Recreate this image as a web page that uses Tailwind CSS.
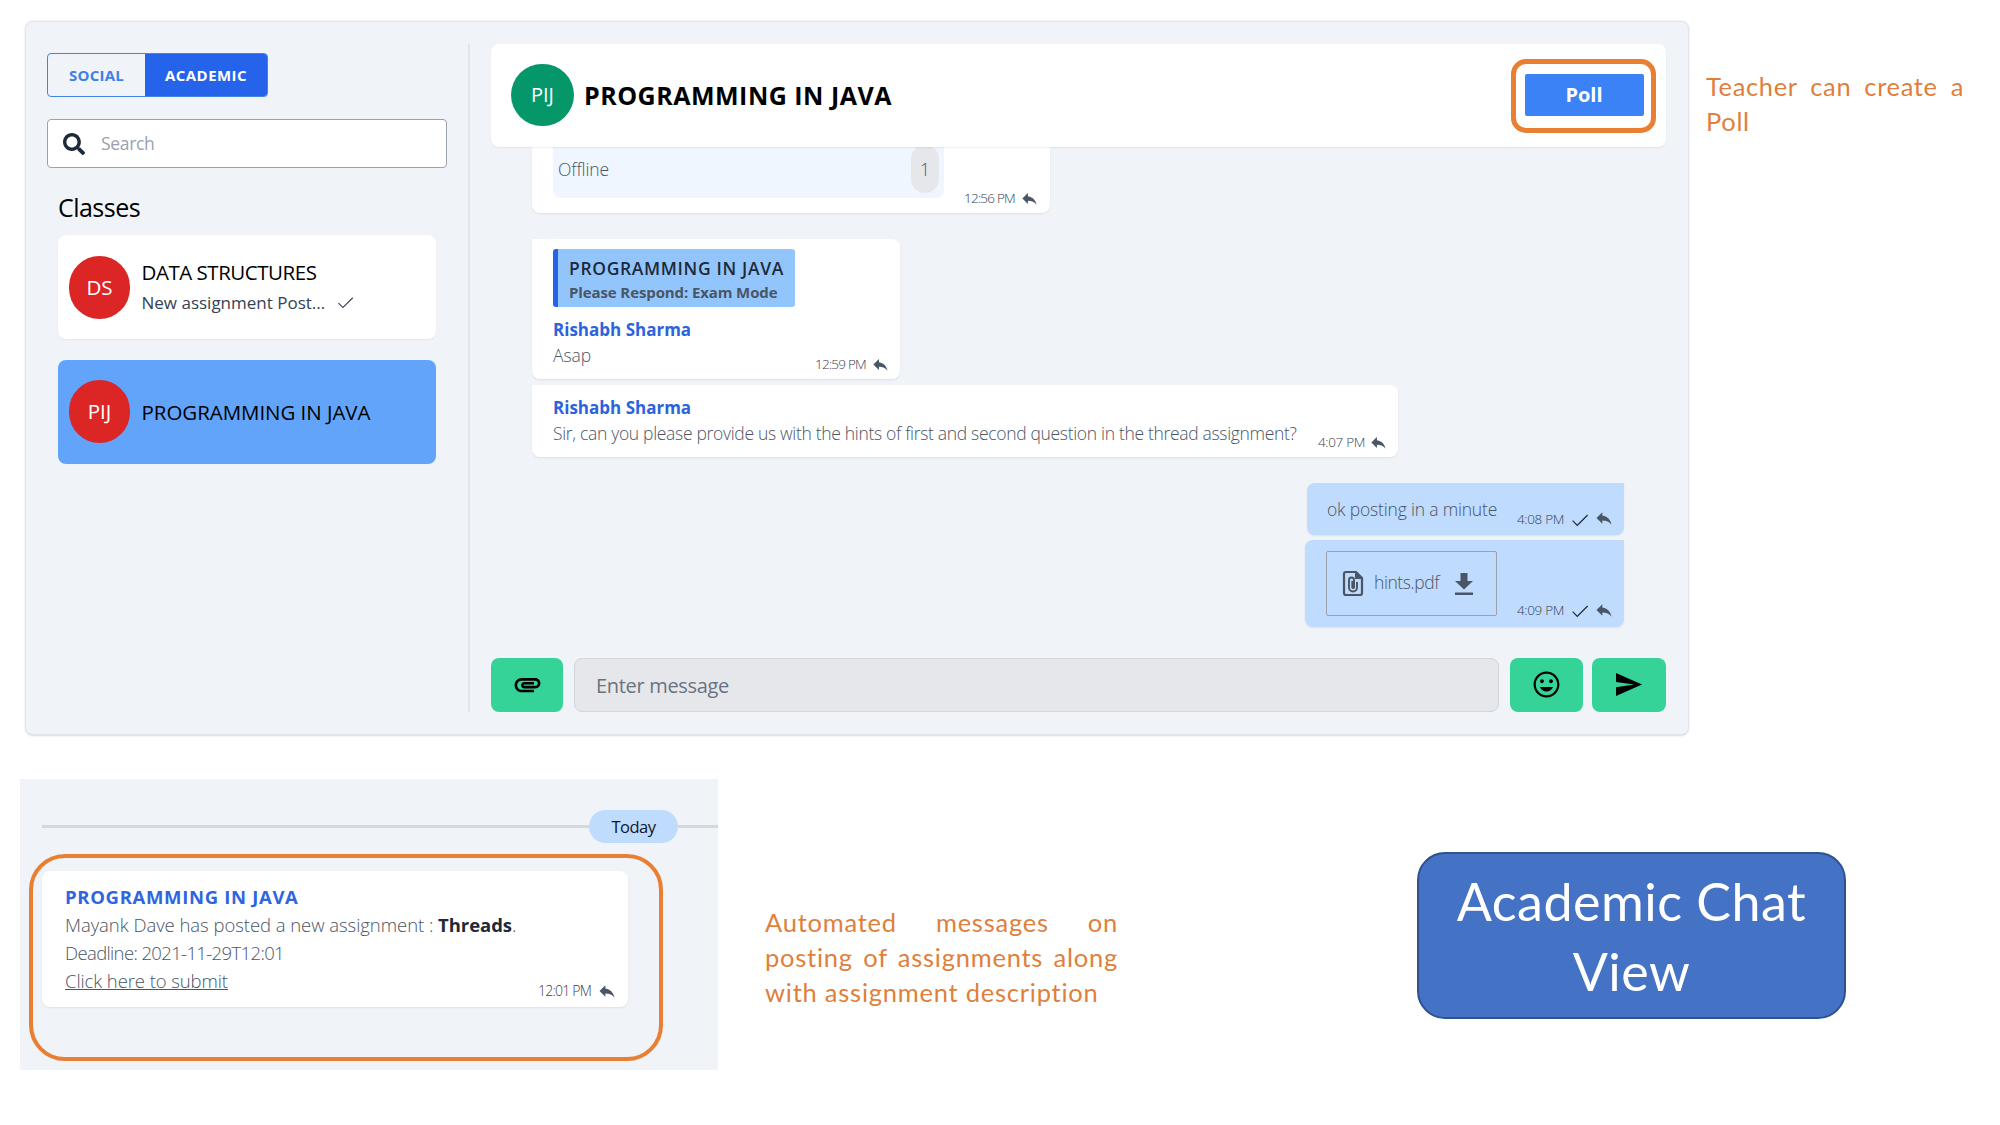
<!DOCTYPE html>
<html lang="en">
<head>
<meta charset="utf-8">
<title>Academic Chat View</title>
<script src="https://cdn.jsdelivr.net/npm/@tailwindcss/browser@4"></script>
</head>
<body class="bg-white">
<svg class="hidden">
  <symbol id="reply" viewBox="0 0 24 24"><path d="M10 9V5l-7 7 7 7v-4.100c5 0 8.500 1.600 11 5.100-1-5-4-10-11-11z"/></symbol>
  <symbol id="check" viewBox="0 0 24 24"><path d="M9 16.900 4.400 12.300l-.9.900L9 18.700 20.800 7l-.9-.9z"/></symbol>
</svg>
<div class="h-[1125px] w-[2000px] overflow-hidden pt-[21px] font-['Open_Sans','Noto_Sans',sans-serif] text-black">

  <div class="flex items-start">
    <!-- Chat window -->
    <div class="ml-[25px] flex h-[715px] w-[1664px] shrink-0 rounded-lg border border-b-2 border-[#e1e5ea] bg-[#f0f4f9] pl-[21px] pt-[22px] shadow-[0_0_3px_rgba(0,0,0,0.1)]">
      <!-- Sidebar -->
      <aside class="h-[668px] w-[423px] border-r-2 border-[#e2e6ec] pt-[9px]">
        <div class="flex h-[44px] w-[221px] overflow-hidden rounded-[4px] border border-[#4285e0] text-[15px] font-bold">
          <div class="flex w-[97px] items-center justify-center tracking-[0.24px] text-[#4080e6]">SOCIAL</div>
          <div class="flex grow items-center justify-center bg-[#2563eb] tracking-[0.45px] text-white">ACADEMIC</div>
        </div>
        <div class="mt-[22px] flex h-[49px] w-[400px] items-center rounded-[4px] border border-gray-400 bg-white pl-[15px]">
          <svg class="size-[22px] fill-gray-800" viewBox="0 0 512 512"><path d="M505 442.700 405.300 343c-4.500-4.500-10.600-7-17-7H372c27.600-35.300 44-79.700 44-128C416 93.100 322.900 0 208 0S0 93.100 0 208s93.100 208 208 208c48.300 0 92.700-16.400 128-44v16.300c0 6.400 2.500 12.500 7 17l99.700 99.700c9.400 9.400 24.600 9.400 33.900 0l28.300-28.300c9.400-9.400 9.400-24.600.1-34zM208 336c-70.700 0-128-57.200-128-128 0-70.700 57.200-128 128-128 70.700 0 128 57.200 128 128 0 70.700-57.200 128-128 128z"/></svg>
          <span class="mb-px ml-[16px] text-[17.5px] tracking-[-0.32px] text-gray-400">Search</span>
        </div>
        <h2 class="ml-[11px] mt-[19px] h-[48px] text-[25px] leading-[40px] tracking-[-0.53px]">Classes</h2>
        <div class="ml-[11px] flex h-[104px] w-[378px] items-center rounded-lg bg-white pl-[11px] shadow-[0_1px_2px_rgba(0,0,0,0.06)]">
          <div class="flex h-[63px] w-[61px] items-center justify-center rounded-full bg-[#dc2626] text-[20.5px] text-white">DS</div>
          <div class="ml-[11.5px]">
            <div class="text-[20.5px] leading-[30px] tracking-[-0.47px]">DATA STRUCTURES</div>
            <div class="flex items-center text-[17px] leading-[31px] text-gray-700">New assignment Post...
              <svg class="ml-[10px] size-[21px] fill-gray-700"><use href="#check"/></svg>
            </div>
          </div>
        </div>
        <div class="ml-[11px] mt-[21px] flex h-[104px] w-[378px] items-center rounded-lg bg-[#61a4fa] pl-[11px]">
          <div class="-mt-px flex h-[63px] w-[61px] items-center justify-center rounded-full bg-[#dc2626] text-[20.5px] text-white">PIJ</div>
          <div class="ml-[11.5px] text-[20.5px] leading-[30px] tracking-[-0.05px]">PROGRAMMING IN JAVA</div>
        </div>
      </aside>

      <!-- Conversation -->
      <main class="ml-[21px] w-[1175px]">
        <header class="relative z-10 flex h-[103px] items-center rounded-lg bg-white pl-[20px] shadow-[0_1px_2px_rgba(0,0,0,0.07)]">
          <div class="-mt-px flex h-[62px] w-[63px] items-center justify-center rounded-full bg-[#059669] text-[20px] text-white">PIJ</div>
          <h1 class="ml-[10px] text-[25px] font-bold tracking-[0.5px]">PROGRAMMING IN JAVA</h1>
          <div class="ml-auto mr-[10px] flex h-[74px] w-[145px] items-center justify-center rounded-[15px] border-[5px] border-[#e97f33] pb-px pl-px">
            <button class="h-[42px] w-[119px] rounded-[2px] bg-[#3b82f6] text-[20px] font-bold text-white">Poll</button>
          </div>
        </header>

        <section class="flex h-[511px] flex-col pl-[41px] pr-[42px] font-light text-gray-600">
          <!-- Poll result message, scrolled under the header -->
          <div class="flex h-[66px] w-[518px] items-start rounded-b-lg bg-white pl-[21px] shadow-[0_1px_2px_rgba(0,0,0,0.08)]">
            <div class="flex h-[51px] w-[391px] items-start rounded-b-lg bg-[#eff6ff] pl-[5px] pr-[5px]">
              <span class="mt-[9px] text-[17.5px] leading-[26px] tracking-[-0.11px]">Offline</span>
              <span class="-mt-[2px] ml-auto flex h-[48px] w-[28px] items-center justify-center rounded-full bg-gray-200 text-[17.5px]">1</span>
            </div>
            <div class="ml-[20px] mt-[42px] flex h-[18px] items-center text-[13.5px] font-light">
              <span class="w-[56px] tracking-[-0.76px] text-gray-700">12:56 PM</span>
              <svg class="size-[19px] fill-gray-600"><use href="#reply"/></svg>
            </div>
          </div>

          <div class="mt-[26px] flex h-[140px] w-[368px] items-end rounded-lg rounded-tl-none bg-white pb-[11px] pl-[21px] shadow-[0_1px_2px_rgba(0,0,0,0.08)]">
            <div class="w-[262px]">
              <div class="mb-[10px] h-[58px] w-[242px] rounded-[3px] border-l-[5px] border-[#2563eb] bg-[#93c5fd] pl-[11px] pt-[6px]">
                <div class="text-[17.5px] font-semibold leading-[26px] tracking-[0.65px] text-gray-800">PROGRAMMING IN JAVA</div>
                <div class="text-[15px] font-bold leading-[23px] tracking-[-0.11px] text-gray-600">Please Respond: Exam Mode</div>
              </div>
              <div class="text-[17px] font-bold leading-[26px] text-[#2b63dd]">Rishabh Sharma</div>
              <div class="-mt-px text-[17.5px] leading-[26px] tracking-[-0.09px]">Asap</div>
            </div>
            <div class="-mb-[5px] flex h-[18px] items-center text-[13.5px]">
              <span class="w-[56px] tracking-[-0.76px] text-gray-700">12:59 PM</span>
              <svg class="size-[19px] fill-gray-600"><use href="#reply"/></svg>
            </div>
          </div>

          <div class="mt-[6px] flex h-[72px] w-[866px] items-end rounded-lg rounded-tl-none bg-white pb-[11px] pl-[21px] shadow-[0_1px_2px_rgba(0,0,0,0.08)]">
            <div class="w-[765px]">
              <div class="text-[17px] font-bold leading-[26px] text-[#2b63dd]">Rishabh Sharma</div>
              <div class="-mt-px whitespace-nowrap text-[17.5px] leading-[26px] tracking-[-0.32px]">Sir, can you please provide us with the hints of first and second question in the thread assignment?</div>
            </div>
            <div class="-mb-[5px] flex h-[18px] items-center text-[13.5px]">
              <span class="w-[51px] tracking-[-0.34px] text-gray-700">4:07 PM</span>
              <svg class="size-[19px] fill-gray-600"><use href="#reply"/></svg>
            </div>
          </div>

          <div class="mt-[26px] flex h-[52px] w-[317px] items-center self-end rounded-lg rounded-tr-none bg-[#bfdbfe] pl-[20px] shadow-[0_1px_2px_rgba(0,0,0,0.08)]">
            <span class="w-[190px] text-[17.5px] tracking-[-0.18px]">ok posting in a minute</span>
            <div class="mt-[19px] flex items-center text-[13.5px] leading-[18px]">
              <span class="w-[52px] tracking-[-0.34px] text-gray-700">4:08 PM</span>
              <svg class="mt-[2px] size-[22px] fill-gray-800"><use href="#check"/></svg>
              <svg class="-mt-px ml-[3px] size-[20px] fill-gray-600"><use href="#reply"/></svg>
            </div>
          </div>

          <div class="mt-[5px] flex h-[87px] w-[319px] items-center self-end rounded-lg rounded-tr-none bg-[#bfdbfe] pl-[21px] shadow-[0_1px_2px_rgba(0,0,0,0.08)]">
            <div class="flex h-[65px] w-[171px] items-center rounded-[2px] border border-gray-400 pl-[15px]">
              <svg class="h-[27px] w-[22px]" viewBox="0 0 22 27" fill="none"><path d="M4 2H14L20 8V23Q20 25 18 25H4Q2 25 2 23V4Q2 2 4 2Z" stroke="#4b5563" stroke-width="2.200"/><path d="M13 1L21 9H13Z" fill="#4b5563"/><path d="M15 12V17.500A4 4 0 0 1 7 17.500V10A2.500 2.500 0 0 1 12 10V17.500A1 1 0 0 1 10.300 17.500V11" stroke="#4b5563" stroke-width="1.900"/></svg>
              <span class="mb-[2px] ml-[10px] w-[81px] text-[17.5px] tracking-[-0.42px]">hints.pdf</span>
              <svg class="h-[22px] w-[18px] fill-gray-600" viewBox="0 0 18 22"><path d="M5.500 0H12.500V8H18L9 16.500 0 8H5.500ZM0 19.500H18V22H0Z"/></svg>
            </div>
            <div class="ml-[20px] mt-[53px] flex items-center text-[13.5px] leading-[18px]">
              <span class="w-[52px] tracking-[-0.34px] text-gray-700">4:09 PM</span>
              <svg class="mt-[2px] size-[22px] fill-gray-800"><use href="#check"/></svg>
              <svg class="-mt-px ml-[3px] size-[20px] fill-gray-600"><use href="#reply"/></svg>
            </div>
          </div>
        </section>

        <!-- Message input -->
        <footer class="flex h-[54px]">
          <button class="flex w-[72px] items-center justify-center rounded-lg bg-[#36d399]">
            <svg class="-mt-px h-[31px] w-[31px]" viewBox="0 0 24 24"><path d="M2 12.500C2 9.460 4.460 7 7.500 7H18c2.210 0 4 1.790 4 4s-1.790 4-4 4H9.500C8.120 15 7 13.880 7 12.500S8.120 10 9.500 10H17v2H9.410c-.55 0-.55 1 0 1H18c1.100 0 2-.9 2-2s-.9-2-2-2H7.500C5.570 9 4 10.570 4 12.500S5.570 16 7.500 16H17v2H7.500C4.460 18 2 15.540 2 12.500z"/></svg>
          </button>
          <div class="ml-[11px] flex w-[925px] items-center rounded-lg border border-gray-300 bg-[#e5e7eb] pl-[21px] pt-[2px] text-[20px] tracking-[-0.32px] text-gray-500">Enter message</div>
          <button class="ml-[11px] flex w-[73px] items-center justify-center rounded-lg bg-[#36d399]">
            <svg class="-mt-px size-[31px]" viewBox="0 0 24 24"><path d="M11.990 2C6.470 2 2 6.480 2 12s4.470 10 9.990 10C17.520 22 22 17.520 22 12S17.520 2 11.990 2zM12 20.300c-4.600 0-8.300-3.700-8.300-8.300s3.700-8.300 8.300-8.300 8.300 3.700 8.300 8.300-3.700 8.300-8.300 8.300zm3.500-9.300c.83 0 1.500-.67 1.500-1.500S16.330 8 15.500 8 14 8.670 14 9.500s.67 1.500 1.500 1.500zm-7 0c.83 0 1.500-.67 1.500-1.500S9.330 8 8.500 8 7 8.670 7 9.500 7.670 11 8.500 11zm3.500 6.500c2.330 0 4.310-1.460 5.110-3.500H6.890c.8 2.040 2.780 3.500 5.110 3.500z"/></svg>
          </button>
          <button class="ml-[9px] flex w-[74px] items-center justify-center rounded-lg bg-[#36d399]">
            <svg class="-mt-px h-[23px] w-[26px]" viewBox="0 0 26 23"><path d="M0 0L26 11.500 0 23V14.200L18 11.500 0 9Z"/></svg>
          </button>
        </footer>
      </main>
    </div>

    <p class="ml-[17px] mt-[48px] w-[258px] text-justify font-['Lato',sans-serif] text-[25.5px] leading-[35px] tracking-[0.65px] text-[#df7f3b]">Teacher can create a Poll</p>
  </div>

  <div class="mt-[43px] flex items-start">
    <!-- Automated message excerpt -->
    <div class="relative ml-[20px] h-[291px] w-[698px] shrink-0 bg-[#f0f4f9] pl-[22px] pt-[31px]">
      <div class="flex items-center">
        <div class="h-[3px] w-[547px] bg-[#d3d8de]"></div>
        <div class="flex h-[33px] w-[89px] items-center justify-center rounded-full bg-[#bfdbfe] pt-px text-[16.5px] tracking-[-0.5px] text-gray-900">Today</div>
        <div class="h-[3px] grow bg-[#d3d8de]"></div>
      </div>
      <div class="mt-[28px] flex h-[136px] w-[586px] items-end rounded-lg bg-white pb-[12px] pl-[23px] text-[18.5px] font-light leading-[28px] text-gray-600 shadow-[0_1px_2px_rgba(0,0,0,0.08)]">
        <div class="w-[473px]">
          <div class="-mb-px -mt-px pb-px font-bold tracking-[0.67px] text-[#2f66e0]">PROGRAMMING IN JAVA</div>
          <div class="whitespace-nowrap tracking-[-0.05px]">Mayank Dave has posted a new assignment : <b class="font-bold text-gray-800">Threads</b>.</div>
          <div class="tracking-[-0.63px]">Deadline: 2021-11-29T12:01</div>
          <div><a class="tracking-[-0.09px] underline">Click here to submit</a></div>
        </div>
        <div class="-mb-[5px] flex h-[18px] items-center text-[14px]">
          <span class="w-[59px] tracking-[-0.78px] text-gray-700">12:01 PM</span>
          <svg class="size-[20px] fill-gray-600"><use href="#reply"/></svg>
        </div>
      </div>
      <div class="absolute left-[9px] top-[75px] h-[207px] w-[634px] rounded-[36px] border-[4.5px] border-[#e97f33]"></div>
    </div>

    <p class="ml-[47px] mt-[126px] w-[353px] text-justify font-['Lato',sans-serif] text-[25.5px] leading-[35px] tracking-[0.76px] text-[#df7f3b]">Automated messages on posting of assignments along with assignment description</p>

    <div class="ml-[299px] mt-[73px] flex h-[167px] w-[429px] items-center justify-center rounded-[28px] border-2 border-[#2f528f] bg-[#4472c4] px-[30px] text-center font-['Lato',sans-serif] text-[52px] leading-[70px] tracking-[0.5px] text-white">Academic Chat View</div>
  </div>
</div>
</body>
</html>
